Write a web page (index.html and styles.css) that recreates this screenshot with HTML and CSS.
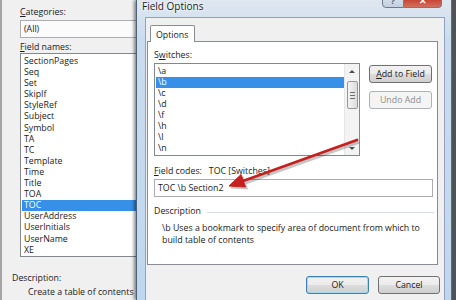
FILE: index.html
```html
<!DOCTYPE html>
<html lang="en">
<head>
  <meta charset="UTF-8">
  <title>Field Options</title>
  <link rel="stylesheet" href="styles.css">
</head>
<body>

  <div class="back">
    <div class="lbl top"><u>C</u>ategories:</div>
    <div class="combo">(All)</div>
    <div class="lbl names"><u>F</u>ield names:</div>
    <ul class="names-list">
      <li>SectionPages</li>
      <li>Seq</li>
      <li>Set</li>
      <li>SkipIf</li>
      <li>StyleRef</li>
      <li>Subject</li>
      <li>Symbol</li>
      <li>TA</li>
      <li>TC</li>
      <li>Template</li>
      <li>Time</li>
      <li>Title</li>
      <li>TOA</li>
      <li class="sel">TOC</li>
      <li>UserAddress</li>
      <li>UserInitials</li>
      <li>UserName</li>
      <li>XE</li>
    </ul>
    <div class="lbl desc-lbl">Description:</div>
    <div class="lbl desc-txt">Create a table of contents</div>
  </div>

  <div class="win">
    <div class="titlebar">
      <span class="title">Field Options</span>
      <span class="cap-btn help">?</span>
      <span class="cap-btn close">&#10005;</span>
    </div>

    <div class="client">
      <div class="tabs">
        <div class="tab">Options</div>
      </div>
      <div class="panel">
        <div class="lbl">S<u>w</u>itches:</div>
        <div class="switch-row">
          <div class="sw-list">
            <ul>
              <li>\a</li>
              <li class="sel">\b</li>
              <li>\c</li>
              <li>\d</li>
              <li>\f</li>
              <li>\h</li>
              <li>\l</li>
              <li>\n</li>
            </ul>
            <div class="vscroll">
              <span class="arr up"></span>
              <span class="thumb"><i></i><i></i><i></i></span>
              <span class="arr down"></span>
            </div>
          </div>
          <div class="side-btns">
            <button class="btn"><u>A</u>dd to Field</button>
            <button class="btn" disabled>Undo Add</button>
          </div>
        </div>

        <div class="lbl codes-lbl"><u>F</u>ield codes:&nbsp;&nbsp; TOC [Switches]</div>
        <div class="codes-box">TOC \b Section2</div>

        <div class="group-head"><span>Description</span><span class="rule"></span></div>
        <p class="desc">\b Uses a bookmark to specify area of document from which to build table of contents</p>
      </div>

      <div class="footer">
        <button class="btn default">OK</button>
        <button class="btn">Cancel</button>
      </div>
    </div>
  </div>

  <div class="edge"></div>

  <!-- annotation arrow drawn over the dialog -->
  <svg class="arrow" width="456" height="300" viewBox="0 0 456 300">
    <g transform="translate(2,2)" fill="#000" stroke="#000" opacity="0.22">
      <line x1="357" y1="140" x2="243" y2="181" stroke-width="3"/>
      <polygon points="229,186 245.5,187 241,174.5" stroke-width="1"/>
    </g>
    <line x1="357" y1="140" x2="243" y2="181" stroke="#c4201d" stroke-width="2.8" stroke-linecap="round"/>
    <polygon points="229,186 245.5,187 241,174.5" fill="#c4201d" stroke="#c4201d" stroke-width="1" stroke-linejoin="round"/>
  </svg>

</body>
</html>
```

FILE: styles.css
```css
body {
  margin: 0;
  width: 456px;
  height: 300px;
  overflow: hidden;
  display: flex;
  background: #f0f0f0;
  font-family: "Segoe UI", "Open Sans", sans-serif;
  font-size: 8.8px;
  color: #1a1a1a;
}
ul {
  list-style: none;
  margin: 0;
  padding: 0;
}
u {
  text-decoration-thickness: 1px;
  text-underline-offset: 1px;
}
.lbl {
  line-height: 11px;
  height: 11px;
  white-space: nowrap;
}

/* dialog behind */
.back {
  flex: none;
  width: 136px;
  box-sizing: border-box;
  border-left: 2px solid #a6a6a6;
  padding-left: 10px;
  overflow: hidden;
}
.back .top {
  margin: 7px 0 0 8px;
}
.combo {
  margin: 2px 0 0 8px;
  width: 140px;
  height: 18px;
  box-sizing: border-box;
  border: 1px solid #abadb3;
  background: #fbfbfb;
  line-height: 16px;
  padding-left: 3px;
}
.back .names {
  margin: 4px 0 0 8px;
}
.names-list {
  margin-left: 8px;
  width: 140px;
  height: 204px;
  box-sizing: border-box;
  border: 1px solid #828790;
  background: #fff;
  padding-top: 2px;
}
.names-list li {
  line-height: 11.1px;
  height: 11.1px;
  padding-left: 2px;
  margin-left: 1px;
}
.sel {
  background: #3690e8;
  color: #fff;
}
.back .desc-lbl {
  margin-top: 16px;
}
.back .desc-txt {
  margin-top: 3px;
  padding-left: 16px;
}

/* Field Options window */
.win {
  flex: none;
  width: 316px;
  box-sizing: border-box;
  border-left: 1px solid #4d6178;
  border-right: 1px solid #3677b3;
  padding: 0 6px 0 8px;
  background: linear-gradient(#dfe7f0, #c9dcef 40px, #bfd7ee);
  box-shadow: -2px 0 3px rgba(0, 0, 0, 0.45);
  display: flex;
  flex-direction: column;
}
.titlebar {
  height: 17px;
  display: flex;
  align-items: flex-start;
}
.title {
  margin: 0 0 0 -3px;
  line-height: 12px;
  font-size: 10px;
  color: #1b1b1b;
  text-shadow: 0 0 4px #fff, 0 0 2px #fff;
  flex: 1;
}
.cap-btn {
  margin-top: -10px;
  height: 18px;
  box-sizing: border-box;
  border: 1px solid #6a7c91;
  text-align: center;
  line-height: 20px;
  font-size: 9px;
  font-weight: bold;
}
.help {
  width: 22px;
  border-radius: 0 0 0 4px;
  background: linear-gradient(#e4ebf3, #c1d0df);
  color: #4e5f72;
}
.close {
  width: 38px;
  margin-right: 3px;
  border-left: none;
  border-radius: 0 0 4px 0;
  background: linear-gradient(#e8a193, #c7493a 60%, #d2705c);
  color: #fff;
}
.client {
  flex: 1;
  border: 1px solid #8fa3ba;
  border-bottom: none;
  background: #f0f0f0;
}
.tabs {
  display: flex;
  padding-left: 4px;
  margin-top: 7px;
}
.tab {
  width: 45px;
  height: 17px;
  box-sizing: border-box;
  border: 1px solid #898c95;
  border-bottom: none;
  border-radius: 2px 2px 0 0;
  background: #fff;
  padding: 3px 0 0 5px;
  margin-bottom: -1px;
  position: relative;
}
.panel {
  margin-left: 1px;
  width: 291px;
  height: 224px;
  box-sizing: border-box;
  border: 1px solid #898c95;
  background: #fff;
  padding: 8px 3px 0 6px;
}
.switch-row {
  display: flex;
  gap: 9px;
  margin-top: 2px;
}
.sw-list {
  width: 206px;
  height: 93px;
  box-sizing: border-box;
  border: 1px solid #828790;
  display: flex;
}
.sw-list ul {
  flex: 1;
  padding-top: 2px;
}
.sw-list li {
  line-height: 11px;
  height: 11px;
  margin-left: 1px;
  padding-left: 2px;
}
.vscroll {
  width: 14px;
  background: #f3f3f3;
  border-left: 1px solid #e6e6e6;
  display: flex;
  flex-direction: column;
  align-items: center;
}
.arr {
  width: 0;
  height: 0;
  border-left: 3px solid transparent;
  border-right: 3px solid transparent;
}
.arr.up {
  margin-top: 6px;
  border-bottom: 3px solid #4d4d4d;
}
.arr.down {
  margin-top: auto;
  margin-bottom: 5px;
  border-top: 3px solid #4d4d4d;
}
.thumb {
  margin-top: 8px;
  width: 11px;
  height: 28px;
  box-sizing: border-box;
  border: 1px solid #979797;
  border-radius: 2px;
  background: linear-gradient(90deg, #f4f4f4, #dcdcdc);
  display: flex;
  flex-direction: column;
  align-items: center;
  justify-content: center;
  gap: 2px;
}
.thumb i {
  width: 5px;
  height: 1px;
  background: #6e6e6e;
}
.side-btns {
  display: flex;
  flex-direction: column;
  gap: 8px;
  padding-top: 2px;
}
.btn {
  width: 63px;
  height: 18px;
  box-sizing: border-box;
  border: 1px solid #707070;
  border-radius: 3px;
  background: linear-gradient(#f2f2f2 0, #ebebeb 50%, #dddddd 50%, #cfcfcf 100%);
  font: inherit;
  color: #1a1a1a;
  padding: 0;
}
.btn:disabled {
  border-color: #adb2b5;
  background: #f4f4f4;
  color: #8d8d8d;
}
.btn.default {
  border-color: #3c7fb1;
  box-shadow: inset 0 0 0 1px #a6d7f2;
}
.codes-lbl {
  margin-top: 10px;
}
.codes-box {
  margin-top: 2px;
  width: 279px;
  height: 18px;
  box-sizing: border-box;
  border: 1px solid #abadb3;
  line-height: 16px;
  padding-left: 3px;
}
.group-head {
  margin-top: 9px;
  display: flex;
  align-items: center;
  line-height: 11px;
}
.rule {
  flex: 1;
  margin: 1px 0 0 6px;
  border-top: 1px solid #d5dfe5;
}
.desc {
  margin: 5px 0 0 8px;
  width: 266px;
  line-height: 12px;
}
.footer {
  display: flex;
  justify-content: flex-end;
  gap: 9px;
  padding-right: 4px;
  margin-top: 11px;
}
.footer .btn:last-child {
  width: 62px;
}

.edge {
  flex: none;
  width: 4px;
  background: #4f5257;
}
.arrow {
  position: absolute;
  left: 0;
  top: 0;
  pointer-events: none;
}
```
